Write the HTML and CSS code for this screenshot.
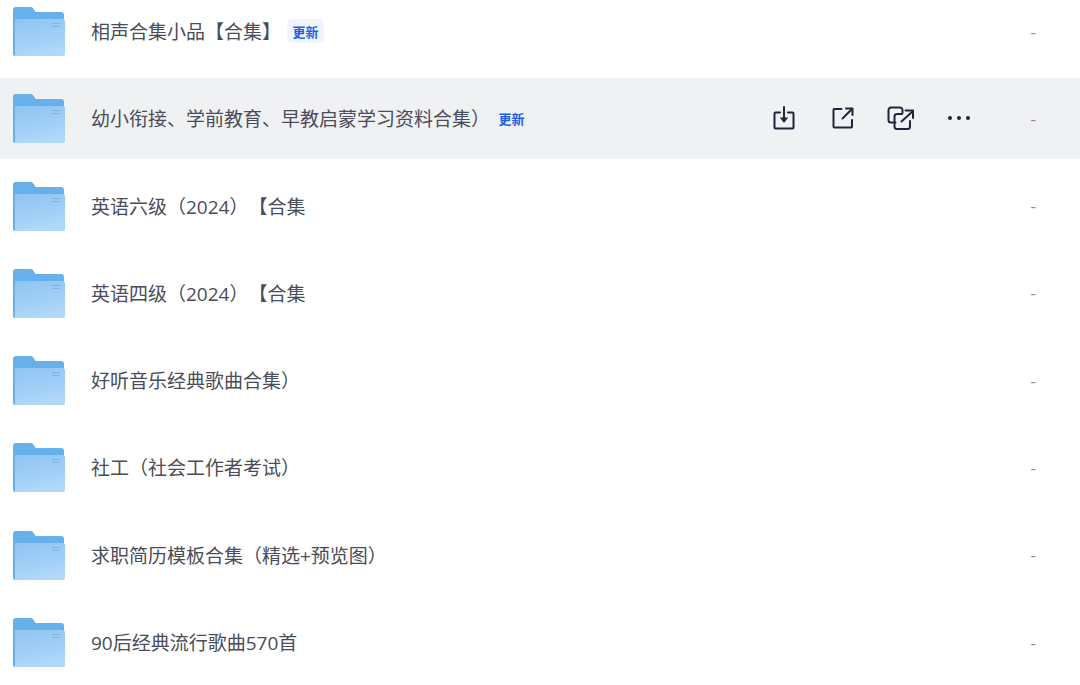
FILE: index.html
```html
<!DOCTYPE html>
<html lang="zh-CN">
<head>
    <meta charset="utf-8">
    <title>文件列表</title>
    <link rel="stylesheet" href="styles.css">
</head>
<body>
    <svg class="defs" width="0" height="0">
        <defs>
            <linearGradient id="folderFront" x1="0" y1="0" x2="0.25" y2="1">
                <stop offset="0" stop-color="#8fc5f2"/>
                <stop offset="0.75" stop-color="#a5d1f7"/>
                <stop offset="1" stop-color="#b0d8f9"/>
            </linearGradient>
            <symbol id="folder" viewBox="0 0 52 49">
                <path d="M0 3a3 3 0 0 1 3-3h14.500c1.500 0 2.300.6 3 1.700l2 3.300H48a3 3 0 0 1 3 3V14H0z" fill="#66b0ec"/>
                <path d="M0 8h3v41H2a2 2 0 0 1-2-2z" fill="#66b0ec"/>
                <path d="M2 12h47.500a2.500 2.500 0 0 1 2.500 2.500V47a2 2 0 0 1-2 2H2z" fill="url(#folderFront)"/>
                <path d="M39 16.500h8M39 19.500h8" stroke="#7fb4e2" stroke-width="1"/>
            </symbol>
        </defs>
    </svg>

    <div class="file-list">
        <div class="file-row">
            <svg class="folder-icon"><use href="#folder"/></svg>
            <span class="file-name">相声合集小品【合集】</span>
            <span class="tag">更新</span>
            <span class="file-size">-</span>
        </div>
        <div class="file-row active">
            <svg class="folder-icon"><use href="#folder"/></svg>
            <span class="file-name">幼小衔接、学前教育、早教启蒙学习资料合集）</span>
            <span class="tag">更新</span>
            <div class="actions">
                <svg class="action" viewBox="0 0 24 24">
                    <path d="M8 6.500H3.500a1 1 0 0 0-1 1v14a1 1 0 0 0 1 1h17a1 1 0 0 0 1-1v-14a1 1 0 0 0-1-1H16"/>
                    <path d="M12 1v13"/>
                    <path class="solid" d="M7.800 11.500h8.400L12 17z"/>
                </svg>
                <svg class="action share" viewBox="0 0 22 22">
                    <path d="M9.500 2H2.500a1 1 0 0 0-1 1v16.500a1 1 0 0 0 1 1H19a1 1 0 0 0 1-1V13"/>
                    <path d="M10.500 11.500L20 2"/>
                    <path d="M14 1.500h6.500V8"/>
                </svg>
                <svg class="action copy" viewBox="0 0 28 24">
                    <path d="M8.500 16.500H4a2.500 2.500 0 0 1-2.500-2.500V4A2.500 2.500 0 0 1 4 1.500h9A2.500 2.500 0 0 1 15.500 4v3"/>
                    <path d="M15 8h-5A2.500 2.500 0 0 0 7.500 10.500v10A2.500 2.500 0 0 0 10 23h10.500a2.500 2.500 0 0 0 2.500-2.500V15"/>
                    <path d="M14.500 15.500L25 6"/>
                    <path d="M18.500 4.500H26V12"/>
                </svg>
                <div class="more"><i></i><i></i><i></i></div>
            </div>
            <span class="file-size">-</span>
        </div>
        <div class="file-row">
            <svg class="folder-icon"><use href="#folder"/></svg>
            <span class="file-name">英语六级（2024）【合集</span>
            <span class="file-size">-</span>
        </div>
        <div class="file-row">
            <svg class="folder-icon"><use href="#folder"/></svg>
            <span class="file-name">英语四级（2024）【合集</span>
            <span class="file-size">-</span>
        </div>
        <div class="file-row">
            <svg class="folder-icon"><use href="#folder"/></svg>
            <span class="file-name">好听音乐经典歌曲合集）</span>
            <span class="file-size">-</span>
        </div>
        <div class="file-row">
            <svg class="folder-icon"><use href="#folder"/></svg>
            <span class="file-name">社工（社会工作者考试）</span>
            <span class="file-size">-</span>
        </div>
        <div class="file-row">
            <svg class="folder-icon"><use href="#folder"/></svg>
            <span class="file-name">求职简历模板合集（精选+预览图）</span>
            <span class="file-size">-</span>
        </div>
        <div class="file-row">
            <svg class="folder-icon"><use href="#folder"/></svg>
            <span class="file-name">90后经典流行歌曲570首</span>
            <span class="file-size">-</span>
        </div>
    </div>
</body>
</html>
```

FILE: styles.css
```css
html, body {
    height: 100%;
}
body {
    margin: 0;
    overflow: hidden;
    background-color: #fff;
    font-family: "Open Sans", "Noto Sans CJK SC", sans-serif;
    text-spacing-trim: space-all;
}
.defs {
    display: block;
    height: 0;
}
.file-list {
    display: flex;
    flex-direction: column;
    gap: 6.3px;
    margin-top: -9.5px;
}
.file-row {
    display: flex;
    align-items: center;
    flex: none;
    height: 81px;
    padding-left: 13px;
}
.file-row.active {
    background-color: #f0f1f3;
}
.folder-icon {
    flex: none;
    width: 52px;
    height: 49px;
    margin: 1px 26px 0 0;
}
.file-name {
    font-size: 19px;
    color: #4a4c59;
}
.tag {
    display: flex;
    align-items: center;
    justify-content: center;
    width: 37px;
    height: 24px;
    margin-left: 6px;
    border-radius: 5px;
    background-color: #f0f4fe;
    color: #1f5fea;
    font-size: 13px;
    font-weight: 700;
}
.active .tag {
    background-color: transparent;
    margin-left: 3px;
}
.actions {
    display: flex;
    align-items: center;
    position: absolute;
    left: 772px;
}
.action {
    flex: none;
    width: 24px;
    height: 24px;
    margin-right: 36px;
    fill: none;
    stroke: #22253a;
    stroke-width: 2;
    stroke-linecap: round;
    stroke-linejoin: round;
}
.action.share {
    width: 22px;
    height: 22px;
    margin-right: 33px;
}
.action.copy {
    width: 28px;
    margin-right: 33px;
}
.action .solid {
    fill: #22253a;
    stroke: none;
}
.more {
    display: flex;
    gap: 5px;
}
.more i {
    width: 4px;
    height: 4px;
    border-radius: 50%;
    background-color: #22253a;
}
.file-size {
    margin-left: auto;
    margin-right: 44px;
    color: #8a8d96;
    font-size: 17px;
}
```
